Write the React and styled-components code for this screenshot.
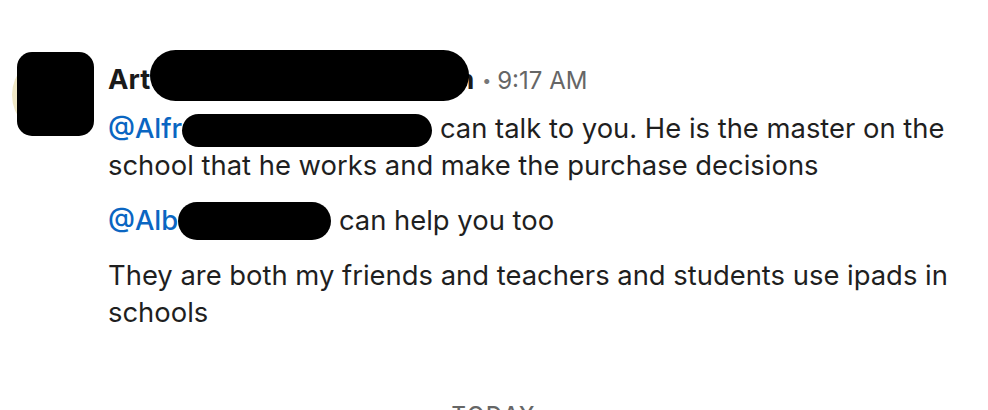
import React from "react";
import styled, { createGlobalStyle } from "styled-components";

const GlobalStyle = createGlobalStyle`
  html, body {
    margin: 0;
    padding: 0;
    background: #fff;
  }
  body {
    font-family: Inter, "Liberation Sans", Arial, sans-serif;
    color: #1f1f1f;
    -webkit-font-smoothing: antialiased;
  }
`;

const Page = styled.div`
  width: 988px;
  height: 410px;
  overflow: hidden;
  background: #fff;
`;

const Message = styled.div`
  display: flex;
  align-items: flex-start;
  padding: 52px 0 0 17px;
  gap: 14px;
`;

const AvatarWrap = styled.div`
  position: relative;
  width: 77px;
  height: 84px;
  flex-shrink: 0;
`;

const AvatarCircle = styled.div`
  position: absolute;
  left: -5px;
  top: 2px;
  width: 82px;
  height: 82px;
  border-radius: 50%;
  background: radial-gradient(circle at 30% 50%, #f4eed6, #e9dfb3 70%);
`;

const AvatarCover = styled.div`
  position: absolute;
  inset: 0;
  background: #000;
  border-radius: 15px;
`;

const Body = styled.div`
  display: flex;
  flex-direction: column;
  margin-top: 9px;
  font-size: 27.4px;
  line-height: 37px;
`;

const Header = styled.div`
  height: 49px;
  white-space: nowrap;
`;

const Name = styled.span`
  font-weight: 650;
  color: #1a1a1a;
`;

const Dot = styled.span`
  color: #777;
  font-size: 16px;
  margin: 0 6px 0 8px;
  position: relative;
  top: -3px;
`;

const Time = styled.span`
  color: #666;
  font-size: 24px;
`;

const Paragraph = styled.p`
  margin: 0 0 18px;
  width: 860px;
`;

const Mention = styled.span`
  color: #0a66c2;
  font-weight: 500;
`;

const Redact = styled.span`
  display: inline-block;
  vertical-align: middle;
  background: #000;
  width: ${(p) => p.w}px;
  height: ${(p) => p.h}px;
  border-radius: ${(p) => p.h / 2}px;
  margin: -${(p) => p.h}px ${(p) => p.mr || 0}px -${(p) => p.h}px 0;
  position: relative;
  top: ${(p) => p.dy || 0}px;
`;

const Divider = styled.div`
  text-align: center;
  margin-top: 52px;
  font-size: 22px;
  line-height: 26px;
  letter-spacing: 2px;
  color: #666;
  font-weight: 500;
`;

export default function App() {
  return (
    <Page>
      <GlobalStyle />
      <Message>
        <AvatarWrap>
          <AvatarCircle />
          <AvatarCover />
        </AvatarWrap>
        <Body>
          <Header>
            <Name>
              Art
              <Redact w={319} h={51} dy={-6} mr={-12} />n
            </Name>
            <Dot>•</Dot>
            <Time>9:17 AM</Time>
          </Header>
          <Paragraph>
            <Mention>
              @Alfr
              <Redact w={250} h={33} />
            </Mention>{" "}
            can talk to you. He is the master on the school that he works and
            make the purchase decisions
          </Paragraph>
          <Paragraph>
            <Mention>
              @Alb
              <Redact w={153} h={38} dy={-2} />
            </Mention>{" "}
            can help you too
          </Paragraph>
          <Paragraph>
            They are both my friends and teachers and students use ipads in
            schools
          </Paragraph>
        </Body>
      </Message>
      <Divider>TODAY</Divider>
    </Page>
  );
}
